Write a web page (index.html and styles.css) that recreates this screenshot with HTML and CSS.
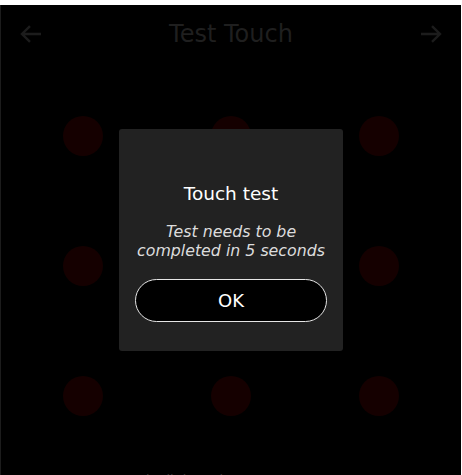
FILE: index.html
```html
<!DOCTYPE html>
<html>
<head>
<meta charset="utf-8">
<link rel="stylesheet" href="styles.css">
</head>
<body>
<div class="topstrip"></div>
<div class="screen">
  <header class="header">
    <svg class="nav-icon" viewBox="0 0 22 18" width="22" height="18"><path d="M21 9H2M10 1.2L2 9l8 7.8" fill="none" stroke="currentColor" stroke-width="2.4"/></svg>
    <h1 class="title">Test Touch</h1>
    <svg class="nav-icon" viewBox="0 0 22 18" width="22" height="18"><path d="M1 9h19M12 1.2L20 9l-8 7.8" fill="none" stroke="currentColor" stroke-width="2.4"/></svg>
  </header>
  <div class="dots">
    <span class="dot"></span><span class="dot"></span><span class="dot"></span>
    <span class="dot"></span><span class="dot"></span><span class="dot"></span>
    <span class="dot"></span><span class="dot"></span><span class="dot"></span>
  </div>
  <div class="footer-row"><span class="footer-icon"></span><span class="footer-text">Touch all the points on screen</span></div>

  <div class="overlay">
    <div class="modal">
      <h2 class="modal-title">Touch test</h2>
      <p class="modal-text">Test needs to be<br>completed in 5 seconds</p>
      <button class="ok-btn">OK</button>
    </div>
  </div>
</div>
</body>
</html>
```
FILE: styles.css
```css
html, body {
  margin: 0;
  padding: 0;
  background: #ffffff;
  height: 100%;
  overflow: hidden;
  font-family: "DejaVu Sans", sans-serif;
}
.topstrip {
  height: 5px;
  background: #ffffff;
}
.screen {
  position: relative;
  background: #000;
  height: 470px;
  margin-right: 1px;
  border-left: 1px solid #1c1c1c;
  box-sizing: border-box;
  overflow: hidden;
}
.header {
  display: flex;
  align-items: center;
  justify-content: space-between;
  height: 58px;
  padding: 0 19px 0 19px;
}
.nav-icon {
  color: #1c1c1c;
  display: block;
}
.title {
  margin: 0;
  font-weight: 400;
  font-size: 24px;
  color: #1f1f1f;
}
.dots {
  display: grid;
  grid-template-columns: repeat(3, 148px);
  grid-auto-rows: 130px;
  justify-content: center;
  justify-items: center;
  align-items: center;
  margin-top: 8px;
}
.dot {
  width: 40px;
  height: 40px;
  border-radius: 50%;
  background: #150000;
}
.footer-row {
  display: flex;
  align-items: center;
  gap: 8px;
  padding-left: 94px;
  margin-top: 11px;
  color: #3a3a3a;
  font-size: 13px;
}
.footer-icon {
  width: 14px;
  height: 10px;
  background: #3a3a3a;
}
.overlay {
  position: absolute;
  inset: 0;
  display: flex;
  justify-content: center;
  padding-top: 124px;
  box-sizing: border-box;
}
.modal {
  width: 224px;
  height: 222px;
  background: #222222;
  border-radius: 3px;
  display: flex;
  flex-direction: column;
  align-items: center;
  box-sizing: border-box;
  padding-top: 54px;
}
.modal-title {
  margin: 0;
  font-weight: 400;
  font-size: 18.5px;
  color: #ffffff;
  line-height: 22px;
}
.modal-text {
  margin: 17px 0 0 0;
  font-style: italic;
  font-size: 15.8px;
  line-height: 19px;
  color: #dcdcdc;
  text-align: center;
}
.ok-btn {
  margin-top: 19px;
  width: 192px;
  height: 43px;
  border-radius: 22px;
  border: 1px solid #e6e6e6;
  background: #000;
  color: #ffffff;
  font-family: "DejaVu Sans", sans-serif;
  font-size: 18px;
  padding: 0;
}
```
